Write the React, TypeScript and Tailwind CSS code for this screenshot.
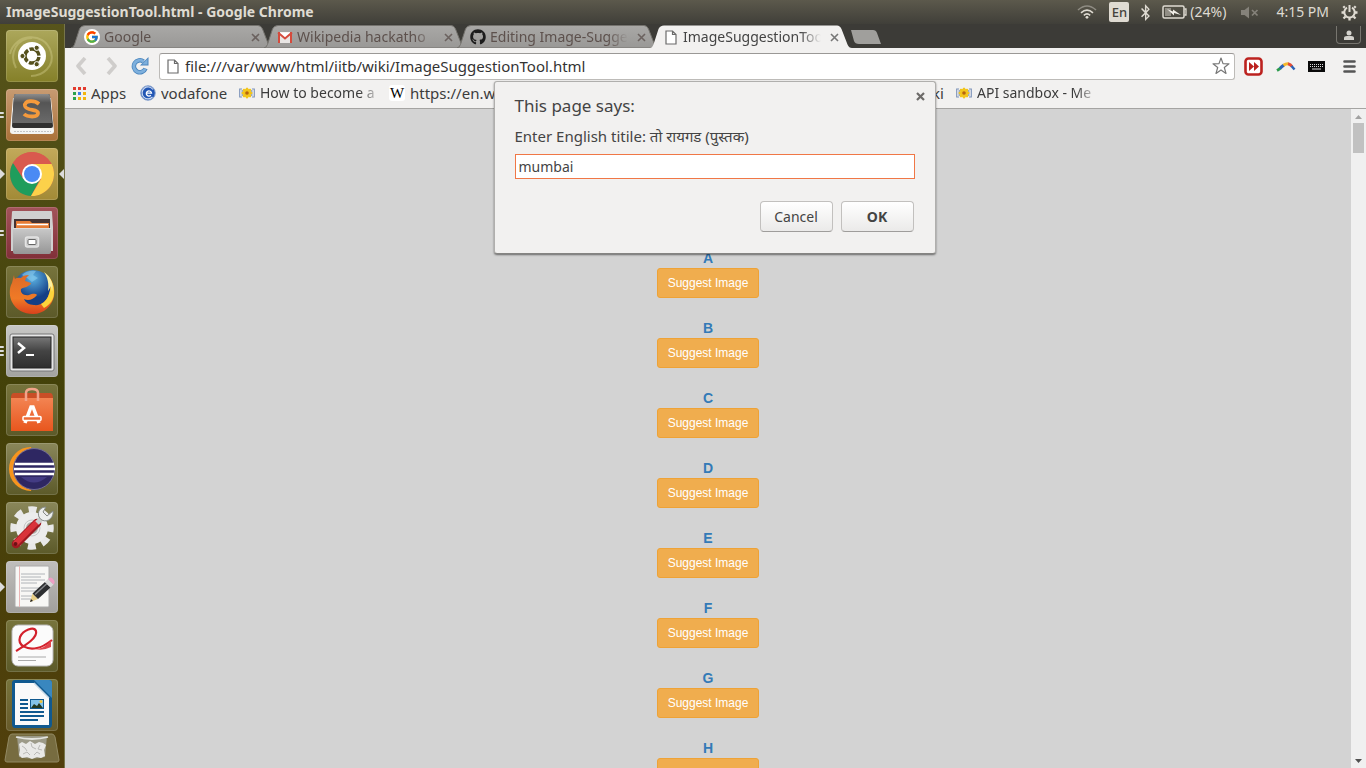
import type { ReactNode } from "react";
import { FaBluetoothB, FaGithub } from "react-icons/fa";
import { FcGoogle } from "react-icons/fc";

const LETTERS = ["A", "B", "C", "D", "E", "F", "G", "H"];

/* ---------- small icons ---------- */

function PageIcon({ className = "" }: { className?: string }) {
  return (
    <svg width="12" height="15" viewBox="0 0 12 15" className={`shrink-0 ${className}`} fill="#fff" stroke="#6b6b6b" strokeWidth="1.2">
      <path d="M1 1h6.5L11 4.5V14H1zM7.5 1v3.5H11" />
    </svg>
  );
}

function GmailIcon() {
  return (
    <svg width="16" height="16" viewBox="0 0 16 16" className="shrink-0">
      <path d="M1 3h14v11H1z" fill="#e9e6e4" />
      <path d="M1 3.5 8 9.5l7-6" fill="#fff" stroke="#d54b3d" strokeWidth="2" />
      <path d="M1 3h2v11H1zM13 3h2v11h-2z" fill="#d54b3d" />
    </svg>
  );
}

function FlowerIcon() {
  return (
    <svg width="16" height="14" viewBox="0 0 16 14" className="shrink-0">
      <path d="M3 3H.7v8H3M13 3h2.300v8H13M3.200 4v6M12.800 4v6" fill="none" stroke="#7b91b8" strokeWidth="1.100" />
      <g fill="#f2c51c">
        <ellipse cx="8" cy="7" rx="2.200" ry="5.600" />
        <ellipse cx="8" cy="7" rx="2.200" ry="5.600" transform="rotate(45 8 7)" />
        <ellipse cx="8" cy="7" rx="2.200" ry="5.600" transform="rotate(90 8 7)" />
        <ellipse cx="8" cy="7" rx="2.200" ry="5.600" transform="rotate(135 8 7)" />
      </g>
      <circle cx="8" cy="7" r="1.800" fill="#b5650f" />
    </svg>
  );
}

function AppsIcon() {
  const colors = ["#e33b2e", "#e33b2e", "#e33b2e", "#2ba24c", "#3f7fe8", "#f2b50f", "#2ba24c", "#f2b50f", "#f2b50f"];
  return (
    <svg width="13" height="13" viewBox="0 0 13 13" className="shrink-0">
      {colors.map((c, i) => (
        <rect key={i} x={(i % 3) * 5} y={Math.floor(i / 3) * 5} width="3" height="3" fill={c} />
      ))}
    </svg>
  );
}

function VodafoneIcon() {
  return (
    <svg width="16" height="16" viewBox="0 0 16 16" className="shrink-0">
      <circle cx="8" cy="8" r="7.300" fill="#2256b4" stroke="#8ea6cf" />
      <path d="M13 4.500A6 6 0 1 0 12.500 12" fill="none" stroke="#c9d8ef" strokeWidth="1.200" />
      <path d="M6 8.200h5.500A2.600 2.600 0 1 0 10.800 10.300" fill="none" stroke="#fff" strokeWidth="1.300" />
    </svg>
  );
}

function Cross({ className = "", size = 9, width = 1.8 }: { className?: string; size?: number; width?: number }) {
  return (
    <svg width={size} height={size} viewBox="0 0 9 9" className={className} stroke="currentColor" strokeWidth={width}>
      <path d="M1 1l7 7M8 1 1 8" />
    </svg>
  );
}

/* ---------- system panel ---------- */

function WifiIcon() {
  return (
    <svg width="20" height="14" viewBox="0 0 20 14" fill="none" strokeWidth="1.600">
      <path d="M1 5Q10-3 19 5" stroke="#8f8c83" />
      <path d="M4 7.800Q10 2.500 16 7.800" stroke="#dfdbd2" />
      <path d="M6.800 10.300Q10 7.600 13.200 10.300" stroke="#dfdbd2" />
      <circle cx="10" cy="12.300" r="1.400" fill="#dfdbd2" />
    </svg>
  );
}

function BatteryIcon() {
  return (
    <svg width="25" height="14" viewBox="0 0 25 14">
      <rect x="1" y="1" width="21" height="12" rx="1.500" fill="none" stroke="#dfdbd2" strokeWidth="1.500" />
      <path d="M22.500 4H24v6h-1.500" fill="none" stroke="#dfdbd2" strokeWidth="1.300" />
      <path d="M3 3h6v8H3z" fill="#918e85" />
      <path d="M5 4l6 2.500V4.500L19 10l-7-2v2.500z" fill="#f0ede6" />
    </svg>
  );
}

function MutedIcon() {
  return (
    <svg width="18" height="13" viewBox="0 0 18 13" fill="#85827a">
      <path d="M0 4h3.500L8 .5v12L3.500 9H0z" />
      <path d="M11 4l5.500 5.500M16.500 4 11 9.500" stroke="#85827a" strokeWidth="1.700" />
    </svg>
  );
}

function SessionIcon() {
  return (
    <svg width="17" height="17" viewBox="0 0 17 17" fill="none" stroke="#dfdbd2">
      <path d="M6 3.700a5.200 5.200 0 1 0 5 0" strokeWidth="2" />
      <path d="M8.500 1v7" strokeWidth="2" />
      <path d="M3.800 3.800 2.300 2.300M13.200 3.800l1.500-1.500M3.300 8.500H.5M16.500 8.500h-2.800M4.500 12.500l-2 2M12.500 12.500l2 2M8.500 14v2.500" strokeWidth="2.300" />
    </svg>
  );
}

function TopPanel() {
  return (
    <header className="flex h-6 shrink-0 items-center justify-between bg-gradient-to-b from-[#5c594c] to-[#403f39] pr-2 pl-[6px] text-[#dfdbd2]">
      <h1 className="text-[14px] leading-6 font-bold">ImageSuggestionTool.html - Google Chrome</h1>
      <div className="flex items-center text-[14px] leading-6">
        <WifiIcon />
        <span className="ml-3 flex h-5 w-5 items-center justify-center rounded-[2px] bg-[#dfdbd2] text-[13px] font-medium text-[#45433c]">En</span>
        <FaBluetoothB size={17} className="ml-2" />
        <span className="ml-2 flex items-center gap-[3px]">
          <BatteryIcon />
          <span>(24%)</span>
        </span>
        <span className="ml-[15px]">
          <MutedIcon />
        </span>
        <time className="ml-[17px]">4:15 PM</time>
        <span className="ml-3">
          <SessionIcon />
        </span>
      </div>
    </header>
  );
}

/* ---------- launcher ---------- */

function UbuntuArt() {
  return (
    <>
      <path d="M4 24C8 4 38 0 45 22c4 14-8 24-20 24M10 38C2 22 12 8 26 8" fill="none" stroke="#d6d391" strokeOpacity=".4" strokeWidth="2" />
      <circle cx="26" cy="26" r="14" fill="#fff" />
      <circle cx="26" cy="26" r="7" fill="none" stroke="#55501c" strokeWidth="3.500" strokeDasharray="13 1.660" strokeDashoffset="-1" />
      <g fill="#55501c" stroke="#fff">
        <circle cx="16.500" cy="26" r="2.600" />
        <circle cx="30.700" cy="17.800" r="2.600" />
        <circle cx="30.700" cy="34.200" r="2.600" />
      </g>
    </>
  );
}

function SublimeArt() {
  return (
    <>
      <path d="M7 9h38l3 33q0 3-3 3H7q-3 0-3-3z" fill="#f4f4f2" />
      <path d="M8 42.500h37" stroke="#c4c4c4" strokeDasharray="2 1" />
      <path d="M10 5h32q2 0 2 2l3 30q0 2-2 2H8q-2 0-2-2L8 7q0-2 2-2z" fill="#303030" />
      <path d="M10 5h32q2 0 2 2l2 27H6L8 7q0-2 2-2z" fill="url(#keycap)" />
      <path d="M33 15c-5-4-15-4-14 2 1 5 13 3 13 7 0 5-11 4-14 1" fill="none" stroke="#f59a3c" strokeWidth="3.800" />
    </>
  );
}

function ChromeArt() {
  return (
    <>
      <circle cx="26" cy="26" r="22" fill="#d95a4e" />
      <path d="M26 26 7 15A22 22 0 0 0 25 48l9-17z" fill="#1f9d5c" />
      <path d="M26 16h19.600A22 22 0 0 1 25 48l10-17z" fill="#fcd14a" />
      <path d="M26 26l-8.700 5L7 15A22 22 0 0 1 45.600 16H26z" fill="#d95a4e" />
      <circle cx="26" cy="26" r="10" fill="#fff" />
      <circle cx="26" cy="26" r="8" fill="#4a8af4" />
    </>
  );
}

function FilesArt() {
  return (
    <>
      <path d="M6 5q0-1 1-1h38q1 0 1 1l1 15v24H5V20z" fill="#d0d0d0" />
      <path d="M8 12h36v12H8z" fill="#433" />
      <path d="M10 14h14l2 2h17v8H10z" fill="#e67c35" />
      <path d="M11 17.500h31" stroke="#fff" strokeWidth="1.500" />
      <path d="M7 21h38v24q0 2-2 2H9q-2 0-2-2z" fill="url(#silver)" />
      <path d="M7 21.500h38" stroke="#ddd" />
      <rect x="19.500" y="30" width="13" height="10" rx="2" fill="#cfcfcf" stroke="#e4e4e4" strokeWidth="1.500" />
      <rect x="22" y="32.500" width="8" height="5" rx="1" fill="#fff" stroke="#666" />
    </>
  );
}

function FirefoxArt() {
  return (
    <>
      <circle cx="27" cy="24" r="20" fill="url(#blueBall)" />
      <path d="M16 9q5-5 14-4l-3 4 5 3-6 4-5-4z" fill="#8fd0f0" opacity=".55" />
      <path
        d="M8 9 6 17C3 22 3 30 6 36c4 8 12 12 21 12 11 0 19-8 21-18 1-8-1-15-6-20 3 7 3 13 1 18-2 7-8 12-15 11-5 0-9-3-10-6 4 2 9 1 13-4-2-2-5-1-8 0-5 1-9-2-8-6 2-2 5-1 7-3l3-2c0-2-4-2-6-3q1-4 4-6-6 0-8 3-4-1-6 1-1-2-1-4z"
        fill="url(#foxFur)"
      />
      <path d="M42 10c3 7 3 13 1 18-1 4-4 8-8 10l3 4c7-4 10-9 10-16 0-6-2-12-6-16z" fill="#fbd53c" />
      <path d="M38 6c4 6 5 12 4 19l3-5 1 6c2-8-1-15-8-20z" fill="#fdf0a0" />
    </>
  );
}

function TerminalArt() {
  return (
    <>
      <rect x="4" y="9" width="44" height="37" rx="2" fill="#e6e6e6" stroke="#777" />
      <rect x="7" y="12" width="38" height="31" fill="url(#darkKey)" stroke="#222" />
      <path d="M12 18l6 5-6 5" fill="none" stroke="#fff" strokeWidth="2.500" />
      <path d="M20 30h8" stroke="#fff" strokeWidth="2" />
    </>
  );
}

function SoftwareArt() {
  return (
    <>
      <path d="M5 14q0-5 3-5h36q3 0 3 5z" fill="#c94e26" />
      <path d="M5 14h42v33H5z" fill="url(#orange)" />
      <path d="M20 17V9q0-4 6-4t6 4v8" fill="none" stroke="#f1a48a" strokeWidth="2.500" />
      <path d="M19 39l6-16h2l6 16" fill="none" stroke="#fff" strokeWidth="3.500" />
      <rect x="17" y="32.500" width="18" height="4" rx="1" fill="#ed6a35" stroke="#fff" strokeWidth="1.500" />
    </>
  );
}

function EclipseArt() {
  return (
    <>
      <path d="M25 5a21 21 0 0 0 0 42A23 23 0 0 1 25 5z" fill="#f7951e" stroke="#f7951e" strokeWidth="2" />
      <circle cx="28" cy="26" r="20.500" fill="#2e2762" stroke="#716b96" />
      <path d="M15 34q13 11 26 0z" fill="#4d4491" opacity=".7" />
      <path d="M9 21h39M8 26h41M9 31h39" stroke="#fff" strokeWidth="2.400" />
    </>
  );
}

function SettingsArt() {
  return (
    <>
      <circle cx="26" cy="26" r="18.500" fill="none" stroke="#e8e8e8" strokeWidth="6.500" strokeDasharray="8 6.530" strokeDashoffset="4" />
      <circle cx="26" cy="26" r="11" fill="#a9a9a2" stroke="#ececec" strokeWidth="10" />
      <circle cx="26" cy="26" r="8" fill="none" stroke="#c6c6c6" />
      <path d="M10 42 31 21" stroke="#9f1920" strokeWidth="8.500" strokeLinecap="round" />
      <path d="M10 41 30 21" stroke="#d9333a" strokeWidth="5.500" strokeLinecap="round" />
      <path d="M31 21l6-6" stroke="#c9cccb" strokeWidth="5" />
      <path d="M40 5c-6 0-9 5-7 10 3 6 12 5 14-3l0-3-6 5-4-4z" fill="#eceeed" stroke="#858a88" />
      <circle cx="9.500" cy="42" r="2" fill="#6e0f14" />
    </>
  );
}

function EditorArt() {
  return (
    <>
      <rect x="9" y="5" width="34" height="41" rx="1" fill="#f7f7f5" stroke="#aaa" />
      <path d="M15 13h24M15 16h20M15 19h24M15 22h16M15 27h22M15 30h18M15 35h14M15 38h10" stroke="#b0b4b8" />
      <path d="M13.500 5v41" stroke="#eab5b5" />
      <path d="M24 41l2.500-8.500 5.500 5.500z" fill="#e8cf86" />
      <path d="M24 41l1-3 2 2z" fill="#222" />
      <path d="M26.500 32.500 39 21l5.500 5.500L32 38z" fill="#2c2e30" />
      <path d="M29 33.500 41 22.500" stroke="#84878a" strokeWidth="1.500" />
      <path d="M39 21l3-3 5.500 5.500-3 3z" fill="#d9d9d9" />
      <path d="M42 18q3-3 5 0 3 3 .5 5.500z" fill="#ee9fc4" />
    </>
  );
}

function EvinceArt() {
  return (
    <>
      <rect x="6" y="5" width="41" height="41" rx="6" fill="#fbfbfb" stroke="#b9b9b9" />
      <path d="M10 31C18 26 32 18 30 11c-2-5-13-1-16 6-3 9 8 13 17 11 6-1 10-4 15-8" fill="none" stroke="#d3212c" strokeWidth="2.200" />
      <path d="M29 29q10 0 16-9v7q-8 4-16 2z" fill="#e0444c" />
      <path d="M12 37h28M12 40.500h18" stroke="#aaa" strokeWidth="1.200" />
    </>
  );
}

function WriterArt() {
  return (
    <>
      <path d="M9 1h34q3 0 3 3v41q0 4-3 4H9q-3 0-3-4V4q0-3 3-3z" fill="#10598f" />
      <path d="M9 4h19l15 15v27H9z" fill="#fafafa" />
      <path d="M28 1h15q3 0 3 3v15z" fill="#3987bf" />
      <path d="M28 4 43 19" stroke="#c8d9e6" strokeWidth="1.500" />
      <path d="M14 21h8M14 25h8M14 29h8M14 33h24M14 37h24M14 41h18" stroke="#10598f" strokeWidth="2" />
      <rect x="24.500" y="20.500" width="13" height="9" fill="#82c2e8" stroke="#10598f" />
      <path d="M25 29l3-4 3 2 2-3 4 5z" fill="#21371f" />
      <circle cx="35" cy="22.500" r="1.500" fill="#f2c437" />
    </>
  );
}

type App = { name: string; tile: string; art: ReactNode; pips?: number; focused?: boolean };

const APPS: App[] = [
  { name: "Search", tile: "from-[#aca75b] to-[#858028]", art: <UbuntuArt /> },
  { name: "Sublime Text", tile: "from-[#c79b72] to-[#ab7137]", art: <SublimeArt />, pips: 2 },
  { name: "Google Chrome", tile: "from-[#c2a95a] to-[#a28a36]", art: <ChromeArt />, pips: 1, focused: true },
  { name: "Files", tile: "from-[#a3535a] to-[#812f38]", art: <FilesArt />, pips: 2 },
  { name: "Firefox", tile: "from-[#77743c] to-[#5c5a29]", art: <FirefoxArt /> },
  { name: "Terminal", tile: "from-[#c8c8c6] to-[#a3a3a0]", art: <TerminalArt />, pips: 3 },
  { name: "Software Center", tile: "from-[#77743c] to-[#5c5a29]", art: <SoftwareArt /> },
  { name: "Eclipse", tile: "from-[#8a875a] to-[#5c5a29]", art: <EclipseArt /> },
  { name: "System Settings", tile: "from-[#8a875a] to-[#5c5a29]", art: <SettingsArt /> },
  { name: "Text Editor", tile: "from-[#c0bebc] to-[#a19f9c]", art: <EditorArt />, pips: 1 },
  { name: "Document Viewer", tile: "from-[#77743c] to-[#5c5a29]", art: <EvinceArt /> },
  { name: "Writer", tile: "from-[#77743c] to-[#675a2a]", art: <WriterArt /> },
];

function Pips({ count }: { count: number }) {
  if (count === 1) {
    return (
      <svg width="5" height="10" viewBox="0 0 5 10" className="absolute top-[21px] -left-[6px]" fill="#dcdcdc">
        <path d="M0 0l5 5-5 5z" />
      </svg>
    );
  }
  return (
    <span className="absolute top-0 -left-[6px] flex h-full flex-col justify-center gap-[2px]">
      {Array.from({ length: count }, (_, i) => (
        <span key={i} className="h-[2px] w-1 rounded-r-full bg-[#dcdcdc]" />
      ))}
    </span>
  );
}

function Launcher() {
  return (
    <nav aria-label="Launcher" className="flex w-[65px] shrink-0 flex-col gap-[7px] overflow-hidden border-r border-[#77754a] bg-gradient-to-b from-[#57541b] via-[#434108] to-[#513f0c] pt-[6px] pl-[6px]">
      <svg width="0" height="0" className="absolute">
        <defs>
          <linearGradient id="darkKey" x2="0" y2="1">
            <stop offset="0" stopColor="#777" />
            <stop offset=".45" stopColor="#444" />
            <stop offset="1" stopColor="#2e2e2e" />
          </linearGradient>
          <linearGradient id="keycap" x2="0" y2="1">
            <stop offset="0" stopColor="#8c8c8c" />
            <stop offset=".3" stopColor="#555" />
            <stop offset="1" stopColor="#6a6a6a" />
          </linearGradient>
          <linearGradient id="silver" x2="0" y2="1">
            <stop offset="0" stopColor="#c9c9c9" />
            <stop offset="1" stopColor="#969696" />
          </linearGradient>
          <linearGradient id="orange" x2="0" y2="1">
            <stop offset="0" stopColor="#f38452" />
            <stop offset="1" stopColor="#e8561e" />
          </linearGradient>
          <linearGradient id="foxFur" x2="0" y2="1">
            <stop offset="0" stopColor="#dd6a27" />
            <stop offset=".6" stopColor="#f07a26" />
            <stop offset="1" stopColor="#d9421c" />
          </linearGradient>
          <radialGradient id="blueBall" cx=".5" cy=".2">
            <stop offset="0" stopColor="#5db4e4" />
            <stop offset="1" stopColor="#153f86" />
          </radialGradient>
        </defs>
      </svg>
      {APPS.map((app) => (
        <button
          key={app.name}
          aria-label={app.name}
          className={`relative h-[52px] w-[52px] shrink-0 rounded-[4px] bg-gradient-to-b shadow-[inset_0_0_0_1px_rgba(255,255,255,0.14)] ${app.tile}`}
        >
          <svg width="52" height="52" viewBox="0 0 52 52">
            {app.art}
          </svg>
          {app.pips && <Pips count={app.pips} />}
          {app.focused && (
            <svg width="5" height="10" viewBox="0 0 5 10" className="absolute top-[21px] -right-[6px]" fill="#dcdcdc">
              <path d="M5 0 0 5l5 5z" />
            </svg>
          )}
        </button>
      ))}
      <button aria-label="Trash" className="-mt-[5px] -ml-[2px] w-14 shrink-0">
        <svg width="56" height="30" viewBox="0 0 56 30">
          <path d="M8 1h40q2 0 3 3l4 23q0 2-2 2H3q-2 0-2-2L5 4q1-3 3-3z" fill="#776c40" stroke="#928963" />
          <path d="M13 3h30l-2 21q-13 3-26 0z" fill="#9c9a88" />
          <path d="M15 11l3-2 4 2 4-3 5 3 4-2 4 1 3 2-2 5 1 6-4 2-4-1-5 2-5-2-5 1-3-3 1-5z" fill="#e9e9e7" />
          <path d="M18 13l3 2 2 3M27 10l1 4 4 2M36 12l-2 4 4 1M19 21l4-2 3 3M30 22l3-3 3 2" fill="none" stroke="#b9b9b6" />
          <path d="M12 4q16 4 32 0" fill="none" stroke="#e4e4df" strokeWidth="1.800" />
        </svg>
      </button>
    </nav>
  );
}

/* ---------- browser ---------- */

type TabProps = { title: string; icon: ReactNode; active?: boolean };

function Tab({ title, icon, active = false }: TabProps) {
  return (
    <div role="tab" aria-selected={active} className={`relative -mr-[9px] h-6 w-[202px] shrink-0 ${active ? "z-10" : ""}`}>
      <svg width="202" height="24" viewBox="0 0 202 24" className="absolute inset-0">
        <path
          d="M0 24Q2 24 3.500 20.500L8.500 5Q10 1.500 14 1.500H187Q190 1.500 191.500 5L197.500 20.500Q199 24 202 24Z"
          fill={active ? "#f2f1f0" : "url(#tabGray)"}
          stroke={active ? "none" : "#75736e"}
        />
      </svg>
      <div className="relative flex h-full items-center pt-[2px] pr-3 pl-[13px]">
        <span className="flex w-4 justify-center">{icon}</span>
        <span className={`ml-1 min-w-0 flex-1 overflow-hidden text-[14px] leading-5 whitespace-nowrap mask-r-from-85% ${active ? "text-[#444]" : "text-[#5d514d]"}`}>{title}</span>
        <button aria-label={`Close ${title}`} className={`ml-2 p-px ${active ? "text-[#777]" : "text-[#6b625f]"}`}>
          <Cross width={1.6} />
        </button>
      </div>
    </div>
  );
}

function TabStrip() {
  return (
    <div role="tablist" className="flex h-6 shrink-0 bg-[#3c3b37] pr-[5px] pl-[6px]">
      <svg width="0" height="0" className="absolute">
        <defs>
          <linearGradient id="tabGray" x2="0" y2="1">
            <stop offset="0" stopColor="#a9a8a6" />
            <stop offset="1" stopColor="#999896" />
          </linearGradient>
        </defs>
      </svg>
      <Tab
        title="Google"
        icon={
          <span className="rounded-full bg-white p-px">
            <FcGoogle size={14} />
          </span>
        }
      />
      <Tab title="Wikipedia hackatho" icon={<GmailIcon />} />
      <Tab title="Editing Image-Sugge" icon={<FaGithub size={16} className="text-[#1c1c1c]" />} />
      <Tab title="ImageSuggestionToo" icon={<PageIcon />} active />
      <button aria-label="New tab" className="ml-[7px] self-center pt-[2px]">
        <svg width="31" height="14" viewBox="0 0 31 14">
          <path d="M1 0h22q3 0 4 3l4 11H9q-4 0-5-3z" fill="#a09f9c" />
        </svg>
      </button>
      <button aria-label="User" className="mt-[2px] ml-auto flex h-[18px] w-[25px] items-center justify-center self-start rounded-b-[4px] border border-t-0 border-[#77756f]">
        <svg width="10" height="10" viewBox="0 0 10 10" fill="#d3d1cc">
          <circle cx="5" cy="3" r="2.500" />
          <path d="M0 10V8q0-2 3-2h4q3 0 3 2v2z" />
        </svg>
      </button>
    </div>
  );
}

function Chevron({ flip = false }: { flip?: boolean }) {
  return (
    <svg width="12" height="18" viewBox="0 0 12 18" fill="none" stroke="#cfcdcb" strokeWidth="3.600" strokeLinejoin="round">
      <path d={flip ? "M2 1l7 8-7 8" : "M10 1 3 9l7 8"} />
    </svg>
  );
}

function Toolbar() {
  return (
    <div className="flex h-8 shrink-0 items-center bg-[#f2f1f0] pt-[4px] pr-[10px] pl-[10px]">
      <button aria-label="Back">
        <Chevron />
      </button>
      <button aria-label="Forward" className="ml-[19px]">
        <Chevron flip />
      </button>
      <button aria-label="Reload" className="ml-[13px]">
        <svg width="18" height="18" viewBox="0 0 18 18">
          <path d="M14.500 11.500A6 6 0 1 1 12.500 4.500" fill="none" stroke="#4a85bd" strokeWidth="4.500" />
          <path d="M17.500 0v8.500H9z" fill="#4a85bd" />
          <path d="M14.200 11.800A6 6 0 1 1 12.500 4.500" fill="none" stroke="#7eb0dd" strokeWidth="2.800" />
          <path d="M16.500 2v5.500H11z" fill="#7eb0dd" />
        </svg>
      </button>
      <div className="ml-[10px] flex h-[27px] min-w-0 flex-1 items-center rounded-[3px] border border-[#bdbbb8] border-t-[#9a9896] bg-white pr-1 pl-[7px]">
        <PageIcon />
        <input aria-label="Address" defaultValue="file:///var/www/html/iitb/wiki/ImageSuggestionTool.html" className="ml-[6px] min-w-0 flex-1 bg-transparent text-[15px] text-[#333] outline-none" />
        <button aria-label="Bookmark this page">
          <svg width="18" height="18" viewBox="0 0 18 18" fill="#fff" stroke="#777" strokeWidth="1.200" strokeLinejoin="round">
            <path d="M9 1l2 5.600 6 .2-4.700 3.700 1.700 5.900L9 13l-5 3.400 1.700-5.900L1 6.800l6-.2z" />
          </svg>
        </button>
      </div>
      <button aria-label="Video speed" className="ml-[9px]">
        <svg width="19" height="19" viewBox="0 0 19 19">
          <rect x="1.500" y="1.500" width="16" height="16" rx="3" fill="#fff" stroke="#bc221f" strokeWidth="2.600" />
          <path d="M5 5l5 4.500L5 14zM10 5l5 4.500-5 4.500z" fill="#bc221f" />
        </svg>
      </button>
      <button aria-label="Boomerang" className="ml-[13px]">
        <svg width="20" height="12" viewBox="0 0 20 12" fill="none" strokeWidth="3">
          <path d="M1 10.500Q3 9.500 4.500 8" stroke="#2c9b4d" />
          <path d="M4 8.300Q6 6.500 8 5" stroke="#2b63b5" />
          <path d="M7.500 5.300Q10 3.500 12.500 3.800" stroke="#f5b92b" />
          <path d="M12 3.700q2.500.5 4 2.800" stroke="#e34c36" />
          <path d="M15.500 6l3 3.500" stroke="#2b63b5" strokeWidth="2.500" />
        </svg>
      </button>
      <button aria-label="Keyboard" className="ml-3">
        <svg width="17" height="11" viewBox="0 0 17 11">
          <rect width="17" height="11" fill="#0a0a0a" />
          <path d="M2 3.500h13M2 5.500h13" stroke="#ddd" strokeDasharray="1 1" />
          <path d="M4 8h9" stroke="#ddd" />
        </svg>
      </button>
      <button aria-label="Menu" className="ml-[18px]">
        <svg width="13" height="13" viewBox="0 0 13 13" stroke="#555" strokeWidth="2.600" strokeLinecap="round">
          <path d="M1.500 1.500h10M1.500 6.500h10M1.500 11.500h10" />
        </svg>
      </button>
    </div>
  );
}

function Bookmark({ icon, label, className = "" }: { icon: ReactNode; label: string; className?: string }) {
  return (
    <a href="#" className={`flex shrink-0 items-center overflow-hidden whitespace-nowrap ${className}`}>
      {icon}
      <span className="ml-[5px] min-w-0 overflow-hidden leading-5">{label}</span>
    </a>
  );
}

function BookmarksBar() {
  return (
    <div className="flex h-[29px] shrink-0 items-center border-b border-[#a5a4a2] bg-[#f2f1f0] pb-[2px] pl-2 text-[15px] text-[#3c3c3c]">
      <Bookmark icon={<AppsIcon />} label="Apps" className="w-[67px]" />
      <Bookmark icon={<VodafoneIcon />} label="vodafone" className="w-[99px]" />
      <Bookmark icon={<FlowerIcon />} label="How to become a" className="w-[142px] text-[14px] mask-r-from-85%" />
      <Bookmark
        icon={<span className="flex h-4 w-4 shrink-0 items-center justify-center rounded-[3px] bg-white font-['Liberation_Serif',serif] text-[15px] text-black">W</span>}
        label="https://en.wiki"
        className="ml-2 w-[130px]"
      />
      <Bookmark icon={<FlowerIcon />} label="MediaWiki" className="ml-[250px] w-[175px] justify-end" />
      <Bookmark icon={<FlowerIcon />} label="API sandbox - Me" className="ml-3 w-[142px] text-[14px] mask-r-from-85%" />
    </div>
  );
}

function PromptDialog() {
  return (
    <div className="absolute top-[57px] right-0 left-0 z-20 flex justify-center pr-[2px]">
      <form
        role="dialog"
        aria-label="This page says:"
        onSubmit={(e) => e.preventDefault()}
        className="relative w-[442px] rounded-[3px] border border-[#b0afad] border-b-[#858482] bg-[#f2f1f0] px-5 pt-3 pb-[21px] text-[14px] text-[#444] shadow-[0_1px_2px_rgba(0,0,0,0.5)]"
      >
        <h2 className="text-[17px] leading-6">This page says:</h2>
        <button type="button" aria-label="Close" className="absolute top-[10px] right-[10px] text-[#6d6b69]">
          <Cross width={2.2} />
        </button>
        <label htmlFor="answer" className="mt-2 block text-[15px] leading-5">
          Enter English titile: तो रायगड (पुस्तक)
        </label>
        <input id="answer" defaultValue="mumbai" className="mt-2 block h-[25px] w-full border border-[#f07746] bg-white px-[3px] outline-none" />
        <div className="mt-[22px] flex justify-end gap-2 pr-px">
          <button type="button" className="h-[31px] w-[73px] rounded-[4px] border border-[#c2c0be] border-b-[#9f9d9b] bg-gradient-to-b from-white to-[#ebeae9]">
            Cancel
          </button>
          <button type="submit" className="h-[31px] w-[73px] rounded-[4px] border border-[#c2c0be] border-b-[#9f9d9b] bg-gradient-to-b from-white to-[#ebeae9] font-bold">
            OK
          </button>
        </div>
      </form>
    </div>
  );
}

function Scrollbar() {
  return (
    <div className="flex w-[15px] shrink-0 flex-col items-center bg-[#f0f0f0] py-[5px]">
      <svg width="7" height="4" viewBox="0 0 7 4" className="mt-px" fill="#a2a2a2">
        <path d="M3.500 0 7 4H0z" />
      </svg>
      <div className="mt-1 h-[30px] w-[11px] bg-[#c1c1c1]" />
      <svg width="7" height="4" viewBox="0 0 7 4" className="mt-auto" fill="#505050">
        <path d="M0 0h7L3.500 4z" />
      </svg>
    </div>
  );
}

export default function App() {
  return (
    <div className="flex h-screen flex-col overflow-hidden bg-[#3c3b37] font-['Noto_Sans',sans-serif]">
      <TopPanel />
      <div className="flex min-h-0 flex-1">
        <Launcher />
        <div className="relative flex min-w-0 flex-1 flex-col">
          <TabStrip />
          <Toolbar />
          <BookmarksBar />
          <div className="flex min-h-0 flex-1">
            <main className="flex min-w-0 flex-1 flex-col items-center gap-5 overflow-hidden bg-[#d3d3d3] pt-[139px] font-['Liberation_Sans',sans-serif]">
              {LETTERS.map((letter) => (
                <section key={letter} className="flex shrink-0 flex-col items-center">
                  <a href="#" className="text-[14px] leading-5 font-bold text-[#337ab7]">
                    {letter}
                  </a>
                  <button className="rounded-[3px] border border-[#eea236] bg-[#f0ad4e] px-[10px] py-[5px] text-[12px] leading-[18px] text-white">Suggest Image</button>
                </section>
              ))}
            </main>
            <Scrollbar />
          </div>
          <PromptDialog />
        </div>
      </div>
    </div>
  );
}
